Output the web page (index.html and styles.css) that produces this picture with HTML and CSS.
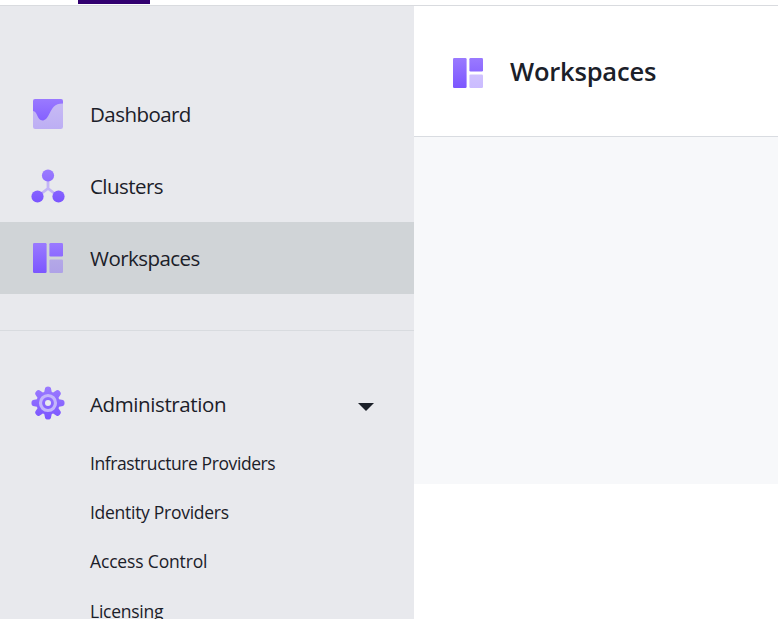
FILE: index.html
```html
<!DOCTYPE html>
<html lang="en">
<head>
<meta charset="utf-8">
<title>Workspaces</title>
<link rel="stylesheet" href="styles.css">
</head>
<body>
<svg class="defs" width="0" height="0" aria-hidden="true">
  <defs>
    <linearGradient id="violet" gradientUnits="userSpaceOnUse" x1="0" y1="2" x2="0" y2="34"><stop offset="0" stop-color="#9b7bff"/><stop offset="1" stop-color="#7b55ff"/></linearGradient>
    <symbol id="workspaces" viewBox="0 0 36 36">
      <rect x="3" y="3" width="13.6" height="30" rx="1.2" fill="url(#violet)"/>
      <rect x="19.4" y="3" width="13.6" height="13.4" rx="1.2" fill="url(#violet)"/>
      <rect x="19.4" y="19.4" width="13.6" height="13.6" rx="1.2" fill="url(#violet)" opacity=".4"/>
    </symbol>
    <path id="teeth" d="M14 8L15.100 3Q15.400 1.400 18 1.400Q20.600 1.400 20.900 3L22 8V28L20.900 33Q20.600 34.600 18 34.600Q15.400 34.600 15.100 33L14 28Z"/>
    <clipPath id="gear">
      <circle cx="18" cy="18" r="11.700"/>
      <use href="#teeth"/>
      <use href="#teeth" transform="rotate(45 18 18)"/>
      <use href="#teeth" transform="rotate(90 18 18)"/>
      <use href="#teeth" transform="rotate(135 18 18)"/>
    </clipPath>
  </defs>
</svg>
<header class="topbar"><span class="active-tab"></span></header>
<div class="layout">
  <aside class="sidebar">
    <nav class="primary">
      <a class="item"><svg class="icon" viewBox="0 0 36 36"><rect x="3" y="3" width="30" height="30" rx="2.2" fill="url(#violet)" opacity=".4"/><path d="M3 15V5.2A2.2 2.2 0 0 1 5.200 3H30.800A2.200 2.200 0 0 1 33 5.200V7.400C24 7.400 22.500 12 19.500 17.500C17 22.500 15 24.500 12.500 24.500C7 24.500 7.500 15 3 15Z" fill="url(#violet)"/></svg><span class="label dashboard">Dashboard</span></a>
      <a class="item"><svg class="icon" viewBox="0 0 36 36"><path d="M18 8V20M7.500 28.500L18 20.500L28.500 28.500" fill="none" stroke="#c3b5f6" stroke-width="2.800"/><circle cx="18" cy="7.500" r="6.100" fill="url(#violet)"/><circle cx="7.500" cy="28.500" r="6.100" fill="url(#violet)"/><circle cx="28.500" cy="28.500" r="6.100" fill="url(#violet)"/></svg><span class="label clusters">Clusters</span></a>
      <a class="item selected"><svg class="icon"><use href="#workspaces"/></svg><span class="label workspaces">Workspaces</span></a>
    </nav>
    <nav class="admin">
      <a class="item"><svg class="icon gear" viewBox="0 0 36 36"><rect width="36" height="36" fill="url(#violet)" clip-path="url(#gear)"/><circle cx="18" cy="18" r="7.500" fill="none" stroke="#c4b6fb" stroke-width="3.200"/><circle cx="18" cy="18" r="3" fill="#e8eaed"/></svg><span class="label administration">Administration</span><svg class="caret" viewBox="0 0 16 8"><path d="M0 0H16L8 8Z"/></svg></a>
      <a class="sub infra">Infrastructure Providers</a>
      <a class="sub identity">Identity Providers</a>
      <a class="sub access">Access Control</a>
      <a class="sub licensing">Licensing</a>
    </nav>
  </aside>
  <main>
    <div class="heading"><svg class="icon"><use href="#workspaces"/></svg><h1>Workspaces</h1></div>
    <div class="canvas"></div>
  </main>
</div>
</body>
</html>
```
FILE: styles.css
```css
* { box-sizing: border-box; }
body { margin: 0; height: 619px; overflow: hidden; background: #fff; color: #1b2029; font-family: "Open Sans", "Noto Sans", sans-serif; }
.defs { position: absolute; }
.topbar { height: 6px; padding-left: 78px; border-bottom: 1px solid #d9dbdf; }
.active-tab { display: block; width: 72.300px; height: 4px; background: #320070; }
.layout { display: flex; height: 613px; }
.sidebar { width: 414px; flex: none; overflow: hidden; background: #e8e9ed; }
.primary { padding: 72px 0 36px; border-bottom: 1px solid #d8dbdf; }
.admin { padding-top: 37px; }
.item { display: flex; align-items: center; height: 72px; padding-left: 30px; }
.selected { background: #d0d4d7; }
.icon { width: 36px; height: 36px; flex: none; display: block; }
.label { margin-left: 24px; font-size: 20.500px; line-height: 28px; font-weight: 400; white-space: nowrap; }
.dashboard, .clusters, .workspaces { letter-spacing: -.55px; }
.administration { letter-spacing: -.39px; }
.gear { margin-top: -2px; }
.caret { width: 16px; height: 8px; margin: 5px 40px 0 auto; fill: #1b2029; }
.sub { display: block; height: 49.200px; padding-left: 90px; line-height: 47px; font-size: 17.500px; font-weight: 400; white-space: nowrap; }
.infra { letter-spacing: -.41px; }
.identity { letter-spacing: -.28px; }
.access { letter-spacing: -.16px; }
.licensing { letter-spacing: -.25px; }
main { flex: 1; min-width: 0; }
.heading { display: flex; align-items: center; height: 131px; padding-left: 36px; border-bottom: 1px solid #d9dce1; }
.heading .icon { margin-top: 3px; }
h1 { margin: 0 0 0 24px; font-size: 25.500px; line-height: 36px; font-weight: 600; letter-spacing: -.2px; }
.canvas { height: 347px; background: #f7f8fa; }
```
